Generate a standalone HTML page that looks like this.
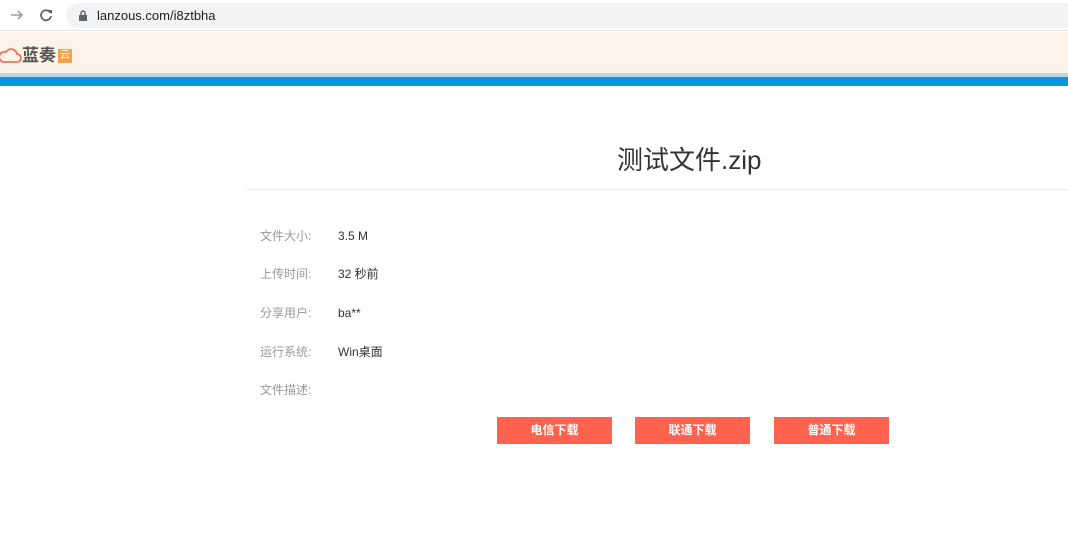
<!DOCTYPE html>
<html><head><meta charset="utf-8"><style>
*{margin:0;padding:0;box-sizing:border-box}
body{width:1068px;height:533px;background:#fff;font-family:"Liberation Sans","Noto Sans CJK SC",sans-serif;position:relative;overflow:hidden}
.bar{position:absolute;left:0;top:0;width:1068px;height:31px;background:#fff;border-bottom:1px solid #e5e5e5}
.url{position:absolute;left:66px;top:3px;width:1010px;height:25px;background:#f1f3f4;border-radius:13px}
.url span{position:absolute;left:31px;top:5px;font-size:13px;color:#202124}
.hdr{position:absolute;left:0;top:32px;width:1068px;height:41px;background:#fdf3e8}
.strip{position:absolute;left:0;top:73px;width:1068px;height:4px;background:#b9d9e8}
.blue{position:absolute;left:0;top:77px;width:1068px;height:9px;background:#0a95e5}
.title{position:absolute;left:617px;top:140px;font-size:26px;color:#333}
.hr{position:absolute;left:245px;top:189px;width:823px;height:1px;background:#eee}
.row{position:absolute;left:260px;font-size:12px}
.row b{font-weight:normal;color:#999;display:inline-block;width:78px}
.row i{font-style:normal;color:#333}
.btn{position:absolute;top:417px;width:115px;height:27px;background:#ff6350;color:#fff;font-size:12px;text-align:center;line-height:27px;font-weight:600}
</style></head><body>
<div class="bar">
<svg style="position:absolute;left:9px;top:7px" width="16" height="16"><path d="M2 8h11M9 4l4 4-4 4" stroke="#9aa0a6" stroke-width="1.6" fill="none"/></svg>
<svg style="position:absolute;left:38px;top:7px" width="16" height="16"><path d="M12.5 6A5 5 0 1 0 13 9" stroke="#5f6368" stroke-width="1.8" fill="none"/><path d="M10 3h4v4z" fill="#5f6368"/></svg>
<div class="url"><svg style="position:absolute;left:12px;top:7px" width="10" height="11"><rect x="1" y="5" width="8" height="6" fill="#5f6368"/><path d="M3 5V3a2 2 0 0 1 4 0v2" stroke="#5f6368" stroke-width="1.4" fill="none"/></svg><span>lanzous.com/i8ztbha</span></div>
</div>
<div class="hdr">
<svg style="position:absolute;left:-2px;top:14px" width="24" height="18"><path d="M5 16h14a4 4 0 0 0 0-8 6 6 0 0 0-11-2A5 5 0 0 0 5 16z" stroke="#f0705a" stroke-width="1.8" fill="none"/></svg>
<span style="position:absolute;left:22px;top:14px;font-size:17px;line-height:20px;font-weight:bold;color:#555">蓝奏</span>
<span style="position:absolute;left:58px;top:17px;width:14px;height:14px;background:#f6a14b;color:#fff;font-size:10px;line-height:14px;text-align:center">云</span>
</div>
<div class="strip"></div><div class="blue"></div>
<div class="title">测试文件.zip</div>
<div class="hr"></div>
<div class="row" style="top:227px"><b>文件大小:</b><i>3.5 M</i></div>
<div class="row" style="top:265px"><b>上传时间:</b><i>32 秒前</i></div>
<div class="row" style="top:304px"><b>分享用户:</b><i>ba**</i></div>
<div class="row" style="top:343px"><b>运行系统:</b><i>Win桌面</i></div>
<div class="row" style="top:381px"><b>文件描述:</b></div>
<div class="btn" style="left:497px">电信下载</div>
<div class="btn" style="left:635px">联通下载</div>
<div class="btn" style="left:774px">普通下载</div>
</body></html>
